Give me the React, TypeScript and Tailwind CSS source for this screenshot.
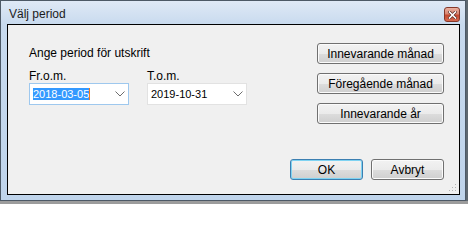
import React from 'react';

function Chevron() {
  return (
    <svg width="10" height="6" viewBox="0 0 10 6" className="shrink-0">
      <polyline points="0.5,0.5 5,5 9.5,0.5" fill="none" stroke="#6d6d6d" strokeWidth="1" />
    </svg>
  );
}

function WinButton({ label, focused = false, className = '' }: { label: string; focused?: boolean; className?: string }) {
  return (
    <button
      className={
        'h-[21px] rounded-[3px] border text-[12px] leading-none text-black bg-[linear-gradient(to_bottom,#f2f2f2_0%,#ebebeb_50%,#dddddd_51%,#cfcfcf_100%)] ' +
        (focused
          ? 'border-[#3c7fb1] shadow-[inset_0_0_0_1px_#7fd3f2]'
          : 'border-[#707070] shadow-[inset_0_0_0_1px_#fbfbfb]') +
        ' ' +
        className
      }
    >
      {label}
    </button>
  );
}

export default function App() {
  return (
    <div className="w-[468px] h-[204px] overflow-hidden bg-[#9c9c9c] font-['Liberation_Sans',Arial,sans-serif]">
      <div className="flex">
        {/* dialog window */}
        <div className="w-[466px] h-[201px] flex flex-col border border-[#4d5966] bg-[linear-gradient(to_bottom,#dfe9f6_0%,#c8daee_12%,#bfd4eb_100%)] pl-[6px] pr-[5px] pb-[5px]">
          {/* title bar */}
          <div className="h-[23px] flex items-start justify-between">
            <span className="pl-[2px] pt-[6px] text-[12px] leading-[14px] text-[#1b1b1b]">Välj period</span>
            <div className="mt-[6px] w-[16px] h-[15px] flex items-center justify-center rounded-[3px] border border-[#85382a] bg-[linear-gradient(to_bottom,#eab0a0_0%,#d98672_45%,#c5482f_55%,#d66a50_100%)]">
              <svg width="9" height="8" viewBox="0 0 9 8">
                <path d="M1.5 1 L7.5 7 M7.5 1 L1.5 7" stroke="#5a2a22" strokeWidth="3" strokeLinecap="square" />
                <path d="M1.5 1 L7.5 7 M7.5 1 L1.5 7" stroke="#ffffff" strokeWidth="1.6" strokeLinecap="square" />
              </svg>
            </div>
          </div>

          {/* client area */}
          <div className="relative flex-1 flex flex-col border border-black bg-[#f0f0f0] pl-[21px] pr-[15px] pb-[14px]">
            <div className="flex justify-between">
              <div className="pt-[21px]">
                <div className="text-[12px] leading-[15px] text-black">Ange period för utskrift</div>
                <div className="mt-[8px] flex gap-[18px]">
                  <div className="flex flex-col">
                    <span className="text-[12px] leading-[14px] text-black">Fr.o.m.</span>
                    <div className="w-[100px] h-[22px] flex items-center justify-between border border-[#9ec8ee] bg-white pl-[3px] pr-[3px]">
                      <span className="flex items-center">
                        <span className="bg-[#3399ff] text-white text-[11px] leading-[12px] px-[0px]">2018-03-05</span>
                        <span className="w-[1px] h-[12px] bg-[#f07a1a]" />
                      </span>
                      <Chevron />
                    </div>
                  </div>
                  <div className="flex flex-col">
                    <span className="text-[12px] leading-[14px] text-black">T.o.m.</span>
                    <div className="w-[100px] h-[22px] flex items-center justify-between border border-[#e2e2e2] bg-white pl-[3px] pr-[3px]">
                      <span className="text-black text-[11px] leading-[12px]">2019-10-31</span>
                      <Chevron />
                    </div>
                  </div>
                </div>
              </div>

              <div className="pt-[18px] flex flex-col gap-[9px]">
                <WinButton label="Innevarande månad" className="w-[127px]" />
                <WinButton label="Föregående månad" className="w-[127px]" />
                <WinButton label="Innevarande år" className="w-[127px]" />
              </div>
            </div>

            <div className="mt-auto flex justify-end gap-[8px]">
              <WinButton label="OK" focused className="w-[73px]" />
              <WinButton label="Avbryt" className="w-[73px]" />
            </div>

            {/* resize grip */}
            <svg width="8" height="8" viewBox="0 0 8 8" className="absolute right-[2px] bottom-[2px]">
              <rect x="6" y="0" width="1" height="1" fill="#b5b5b5" />
              <rect x="3" y="3" width="1" height="1" fill="#b5b5b5" />
              <rect x="6" y="3" width="1" height="1" fill="#b5b5b5" />
              <rect x="0" y="6" width="1" height="1" fill="#b5b5b5" />
              <rect x="3" y="6" width="1" height="1" fill="#b5b5b5" />
              <rect x="6" y="6" width="1" height="1" fill="#b5b5b5" />
            </svg>
          </div>
        </div>
        <div className="w-[2px] bg-[#5e6870]" />
      </div>
    </div>
  );
}
